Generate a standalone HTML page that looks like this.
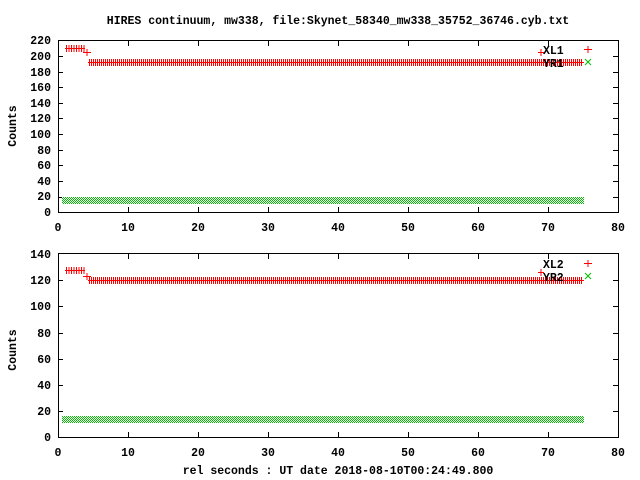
<!DOCTYPE html>
<html><head><style>
html,body{margin:0;padding:0;background:#fff}
svg{display:block}
text{font-family:"Liberation Mono",monospace;font-weight:bold;font-size:11.5px;fill:#000}
</style></head><body>
<svg width="640" height="480" viewBox="0 0 640 480" xmlns="http://www.w3.org/2000/svg" shape-rendering="crispEdges">
<defs>
<pattern id="chk" x="0" y="0" width="2" height="2" patternUnits="userSpaceOnUse">
<rect width="2" height="2" fill="#fff"/>
<rect width="1" height="1" fill="#00c000"/><rect x="1" y="1" width="1" height="1" fill="#00c000"/>
</pattern>
</defs>
<text x="338" y="24" text-anchor="middle">HIRES continuum, mw338, file:Skynet_58340_mw338_35752_36746.cyb.txt</text>

<!-- TOP PLOT -->
<g stroke="#000" stroke-width="1" fill="none">
<rect x="58.5" y="40.5" width="560" height="172"/>
<path d="M58 197.5h5M58 181.5h5M58 165.5h5M58 150.5h5M58 134.5h5M58 118.5h5M58 103.5h5M58 87.5h5M58 72.5h5M58 56.5h5M618 197.5h-5M618 181.5h-5M618 165.5h-5M618 150.5h-5M618 134.5h-5M618 118.5h-5M618 103.5h-5M618 87.5h-5M618 72.5h-5M618 56.5h-5"/>
<path d="M128.5 212v-5M198.5 212v-5M268.5 212v-5M338.5 212v-5M408.5 212v-5M478.5 212v-5M548.5 212v-5M128.5 41v5M198.5 41v5M268.5 41v5M338.5 41v5M408.5 41v5M478.5 41v5M548.5 41v5"/>
</g>
<g text-anchor="end">
<text x="51" y="44">220</text><text x="51" y="60">200</text><text x="51" y="76">180</text><text x="51" y="91">160</text><text x="51" y="107">140</text><text x="51" y="122">120</text><text x="51" y="138">100</text><text x="51" y="154">80</text><text x="51" y="169">60</text><text x="51" y="185">40</text><text x="51" y="200">20</text><text x="51" y="216">0</text>
</g>
<g text-anchor="middle">
<text x="58" y="231">0</text><text x="128" y="231">10</text><text x="198" y="231">20</text><text x="268" y="231">30</text><text x="338" y="231">40</text><text x="408" y="231">50</text><text x="478" y="231">60</text><text x="548" y="231">70</text><text x="618" y="231">80</text>
</g>
<text transform="translate(16,126) rotate(-90)" text-anchor="middle">Counts</text>
<rect x="62" y="197" width="522" height="7" fill="url(#chk)"/>
<g stroke="#f00" stroke-width="1" fill="none">
<path d="M65 48.5h20M83 52.5h8M87 49v7"/>
<line x1="66" y1="48.5" x2="85" y2="48.5" stroke-width="7" stroke-dasharray="1 1.5"/>
<path d="M88 62.5h496"/>
<line x1="89" y1="62.5" x2="583" y2="62.5" stroke-width="7" stroke-dasharray="1 1"/>
<path d="M538 52.5h6M541 49v7M584 49.5h8M588 46v7"/>
</g>
<text x="543" y="54">XL1</text><text x="543" y="67">YR1</text>
<path d="M585 59l6 6M591 59l-6 6" stroke="#00c000" shape-rendering="auto"/>

<!-- BOTTOM PLOT -->
<g stroke="#000" stroke-width="1" fill="none">
<rect x="58.5" y="253.5" width="560" height="184"/>
<path d="M58 411.5h5M58 385.5h5M58 359.5h5M58 333.5h5M58 306.5h5M58 280.5h5M618 411.5h-5M618 385.5h-5M618 359.5h-5M618 333.5h-5M618 306.5h-5M618 280.5h-5"/>
<path d="M128.5 437v-5M198.5 437v-5M268.5 437v-5M338.5 437v-5M408.5 437v-5M478.5 437v-5M548.5 437v-5M128.5 254v5M198.5 254v5M268.5 254v5M338.5 254v5M408.5 254v5M478.5 254v5M548.5 254v5"/>
</g>
<g text-anchor="end">
<text x="51" y="258">140</text><text x="51" y="284">120</text><text x="51" y="310">100</text><text x="51" y="337">80</text><text x="51" y="363">60</text><text x="51" y="389">40</text><text x="51" y="415">20</text><text x="51" y="441">0</text>
</g>
<g text-anchor="middle">
<text x="58" y="456">0</text><text x="128" y="456">10</text><text x="198" y="456">20</text><text x="268" y="456">30</text><text x="338" y="456">40</text><text x="408" y="456">50</text><text x="478" y="456">60</text><text x="548" y="456">70</text><text x="618" y="456">80</text>
</g>
<text transform="translate(16,350) rotate(-90)" text-anchor="middle">Counts</text>
<text x="338" y="474" text-anchor="middle">rel seconds : UT date 2018-08-10T00:24:49.800</text>
<rect x="62" y="416" width="522" height="7" fill="url(#chk)"/>
<g stroke="#f00" stroke-width="1" fill="none">
<path d="M65 270.5h20M83 276.5h8M87 273v7"/>
<line x1="66" y1="270.5" x2="85" y2="270.5" stroke-width="7" stroke-dasharray="1 1.5"/>
<path d="M88 280.5h496"/>
<line x1="89" y1="280.5" x2="583" y2="280.5" stroke-width="7" stroke-dasharray="1 1"/>
<path d="M538 272.5h6M541 269v7M584 263.5h8M588 260v7"/>
</g>
<text x="543" y="268">XL2</text><text x="543" y="281">YR2</text>
<path d="M585 273l6 6M591 273l-6 6" stroke="#00c000" shape-rendering="auto"/>
</svg>
</body></html>
